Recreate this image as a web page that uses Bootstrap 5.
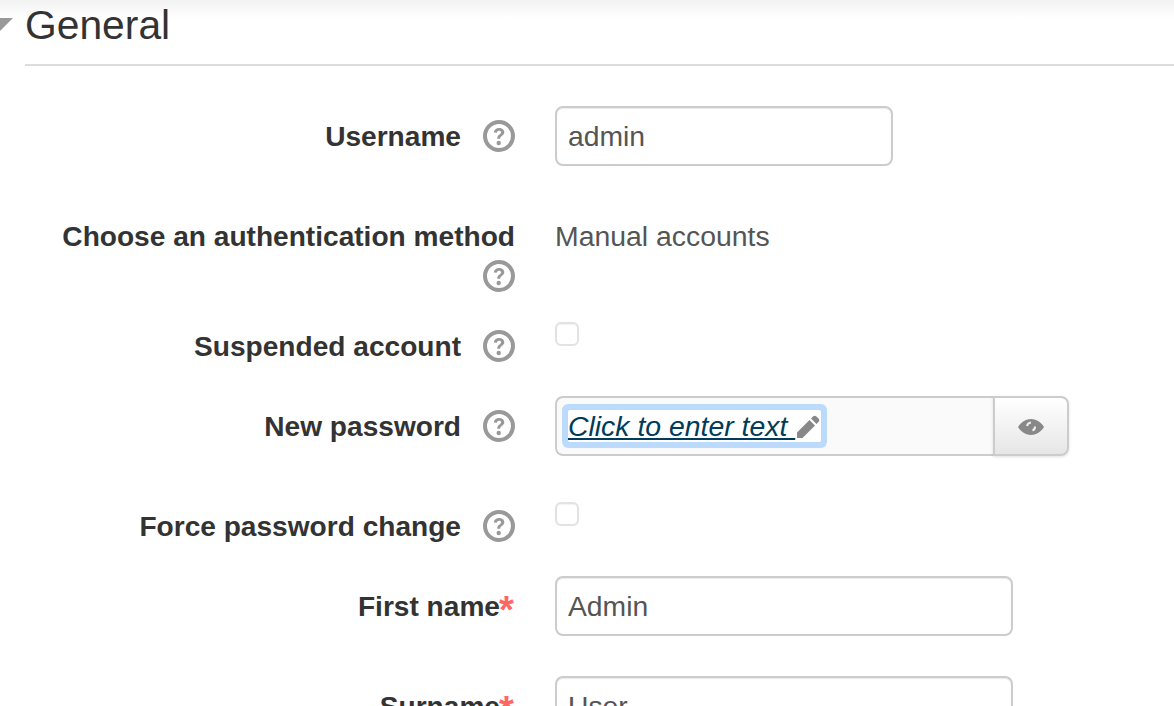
<!DOCTYPE html>
<html lang="en">
<head>
  <meta charset="UTF-8">
  <meta name="viewport" content="width=device-width,initial-scale=1.0">
  <title>Edit profile</title>
  <link href="https://cdn.jsdelivr.net/npm/bootstrap@5.3.3/dist/css/bootstrap.min.css" rel="stylesheet"/>
  <style>
    html, body { height: 706px; overflow: hidden; }
    body {
      font-family: "Liberation Sans", Arial, sans-serif;
      font-size: 28.1px; line-height: 40px; color: #333;
      background: linear-gradient(#f2f2f2, #fff 18px) no-repeat;
    }
    .sec-head { height: 66px; }
    .sec-arrow { width: 13px; height: 13px; margin-top: 18px; flex: none; }
    .sec-title {
      font-size: 40.8px; line-height: 51px; font-weight: 400; margin: 0 0 0 12px;
      flex: 1; height: 66px; border-bottom: 2px solid #ddd;
    }
    .sec-body { padding-top: 40px; }
    .f-row { margin-bottom: 30px; height: 50px; }
    .f-row.has-input { margin-bottom: 40px; height: 60px; }
    .f-row.has-wrap { margin-bottom: 20px; height: 90px; }
    .f-label {
      flex: 0 0 515px; padding: 11px 0 0 50px; margin: 0 40px 0 0;
      font-weight: 700;
    }
    .f-help { width: 32px; height: 32px; margin-left: 22px; vertical-align: -6px; }
    .f-req { color: #f66; font-size: 38px; line-height: 0; vertical-align: -7px; display: inline-block; width: 16px; text-align: left; font-weight: 700; margin-left: -1px; }
    .f-static { padding-top: 10px; color: #555; font-size: 28.4px; }
    .form-control.f-input {
      height: 60px; font-size: 28.3px; line-height: 40px; color: #555;
      padding: 8px 11px; border: 2px solid #ccc; border-radius: 8px;
      box-shadow: inset 0 1px 1px rgba(0,0,0,.08);
    }
    .w-user { width: 338px; }
    .w-name { width: 458px; }
    .form-check-input.f-check {
      width: 24px; height: 24px; margin: 6px 0 0 0; border: 2px solid #e2e2e2; border-radius: 6px;
      box-shadow: inset 0 1px 1px rgba(0,0,0,.05);
    }
    .f-group { width: 514px; height: 60px; }
    .pw-box {
      flex: 1; height: 60px; background: #fafafa; border: 2px solid #ccc; border-right: 0;
      border-radius: 8px 0 0 8px; padding: 12px 0 0 11px;
    }
    .pw-link {
      display: block; width: fit-content; height: 32px; line-height: 32px; background: #fff; color: #003c5a;
      font-size: 28.4px; font-style: italic; text-decoration: underline; white-space: nowrap;
      box-shadow: 0 0 0 6px #bbdafc; border-radius: 2px;
    }
    .pw-pencil { width: 25px; height: 25px; vertical-align: -4px; margin-right: 1px; }
    .btn.pw-btn {
      width: 76px; height: 60px; padding: 0; border: 2px solid #ccc; border-radius: 0 8px 8px 0;
      background: linear-gradient(#fff, #e6e6e6);
      box-shadow: 0 1px 3px rgba(0,0,0,.12);
    }
    .pw-eye { width: 26px; height: 16px; margin-right: 1px; }
  </style>
</head>
<body>
  <svg class="d-none">
    <symbol id="ic-help" viewBox="0 0 32 32">
      <circle cx="16" cy="16" r="14" fill="none" stroke="#999" stroke-width="4"/>
      <path d="M10.800 12.600c.3-3 2.400-4.600 5.300-4.600 3 0 5.200 1.700 5.200 4.200 0 3.600-4.100 3.400-4.100 6.600h-3c0-4.400 3.900-4.200 3.900-6.500 0-1-.8-1.600-2-1.600-1.300 0-2.100.7-2.300 2z" fill="#999"/>
      <circle cx="15.700" cy="23" r="2.200" fill="#999"/>
    </symbol>
  </svg>

  <div class="d-flex sec-head">
    <svg class="sec-arrow" viewBox="0 0 13 13"><path d="M0 0h13L0 13z" fill="#999"/></svg>
    <h2 class="sec-title">General</h2>
  </div>

  <div class="sec-body">
    <div class="d-flex f-row has-input">
      <label class="f-label text-end">Username<svg class="f-help"><use href="#ic-help"/></svg></label>
      <input class="form-control f-input w-user" type="text" value="admin">
    </div>

    <div class="d-flex f-row has-wrap">
      <label class="f-label text-end">Choose an authentication method <svg class="f-help"><use href="#ic-help"/></svg></label>
      <div class="f-static">Manual accounts</div>
    </div>

    <div class="d-flex f-row">
      <label class="f-label text-end">Suspended account<svg class="f-help"><use href="#ic-help"/></svg></label>
      <div><input class="form-check-input f-check" type="checkbox"></div>
    </div>

    <div class="d-flex f-row has-input">
      <label class="f-label text-end">New password<svg class="f-help"><use href="#ic-help"/></svg></label>
      <div class="d-flex f-group">
        <div class="pw-box">
          <a class="pw-link" href="#">Click to enter text <svg class="pw-pencil" viewBox="0 0 25 25"><path d="M18 1.500c1-1 2.400-1 3.400 0l2.100 2.100c1 1 1 2.400 0 3.400l-2 2-5.500-5.500zM14.500 5l5.500 5.500L7.500 23H2v-5.500z" fill="#888"/></svg></a>
        </div>
        <button class="btn pw-btn" type="button" aria-label="Reveal">
          <svg class="pw-eye" viewBox="0 0 26 16"><path d="M13 0C7 0 2.500 4 0 8c2.500 4 7 8 13 8s10.500-4 13-8c-2.500-4-7-8-13-8z" fill="#888"/><path d="M9 7a4.500 4.500 0 0 1 4-3.500M17 7.500a4 4 0 0 1-2.500 4" fill="none" stroke="#eee" stroke-width="2"/></svg>
        </button>
      </div>
    </div>

    <div class="d-flex f-row">
      <label class="f-label text-end">Force password change<svg class="f-help"><use href="#ic-help"/></svg></label>
      <div><input class="form-check-input f-check" type="checkbox"></div>
    </div>

    <div class="d-flex f-row has-input">
      <label class="f-label text-end">First name<span class="f-req">*</span></label>
      <input class="form-control f-input w-name" type="text" value="Admin">
    </div>

    <div class="d-flex f-row has-input">
      <label class="f-label text-end">Surname<span class="f-req">*</span></label>
      <input class="form-control f-input w-name" type="text" value="User">
    </div>
  </div>

  <script src="https://cdn.jsdelivr.net/npm/bootstrap@5.3.3/dist/js/bootstrap.bundle.min.js"></script>
</body>
</html>
